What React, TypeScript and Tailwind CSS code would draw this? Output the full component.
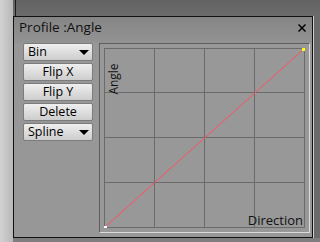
import React from 'react'

const font = { fontFamily: '"Open Sans", "Noto Sans", "Liberation Sans", sans-serif' }

function Arrow() {
  return (
    <svg width="10" height="5" viewBox="0 0 10 5" className="shrink-0">
      <polygon points="0,0 10,0 5,5" fill="#000" />
    </svg>
  )
}

function Dropdown({ label }: { label: string }) {
  return (
    <div className="h-[18px] w-[70px] flex items-center justify-between pl-[4px] pr-[3px] border border-[#7c7c7c] rounded-[2px] bg-gradient-to-b from-[#efefef] to-[#cdcdcd] text-[12.5px] leading-none text-black">
      <span>{label}</span>
      <Arrow />
    </div>
  )
}

function Button({ label }: { label: string }) {
  return (
    <div className="h-[18px] w-[70px] flex items-center justify-center border border-[#7c7c7c] rounded-[2px] bg-gradient-to-b from-[#efefef] to-[#cdcdcd] text-[12.5px] leading-none text-black">
      {label}
    </div>
  )
}

function Chart() {
  const cols = [0.5, 50.5, 100.5, 150.5, 200.5]
  const rows = [0.5, 44.5, 89.5, 134.5, 179.5]
  return (
    <div className="relative w-[211px] h-[190px] p-[4px] border border-l-[#5e5e5e] border-t-[#5e5e5e] border-r-[#dcdcdc] border-b-[#dcdcdc] bg-[#989898]">
      <svg width="201" height="180" viewBox="0 0 201 180" className="block">
        {cols.map((x) => (
          <line key={'c' + x} x1={x} y1={0} x2={x} y2={180} stroke="#6b6b6b" strokeWidth="1" />
        ))}
        {rows.map((y) => (
          <line key={'r' + y} x1={0} y1={y} x2={201} y2={y} stroke="#6b6b6b" strokeWidth="1" />
        ))}
        <line x1={0.5} y1={179.5} x2={200.5} y2={0.5} stroke="#ff4f63" strokeWidth="1" />
        <rect x={-1} y={178} width={4} height={4} fill="#ffffff" />
        <rect x={198} y={-2} width={5} height={5} fill="#ffff00" />
      </svg>
      {/* axis labels */}
      <div className="absolute left-[7px] top-[18px] w-[13px] h-[34px] flex items-center justify-center">
        <span className="-rotate-90 text-[12px] leading-none text-[#111] whitespace-nowrap">Angle</span>
      </div>
      <div className="absolute right-[6px] bottom-[5px] text-[13px] leading-none text-[#111]">Direction</div>
    </div>
  )
}

export default function App() {
  return (
    <div className="w-[320px] h-[242px] flex overflow-hidden bg-[#6a6a6a]" style={font}>
      <div className="w-[13px] h-full bg-gradient-to-r from-[#d2d2d2] to-[#b8b8b8]" />
      <div className="flex-1 flex flex-col">
        <div className="h-[16px] flex bg-gradient-to-b from-[#626262] to-[#6c6c6c]">
          <div className="ml-[2px] w-[1px] h-full bg-[#1c1c1c]" />
        </div>
        <div className="flex">
          {/* window */}
          <div className="w-[300px] h-[222px] flex flex-col border border-[#111] bg-[#979797]">
            <div className="h-[26px] flex items-start justify-between pl-[5px] pr-[5px] pt-[1px] bg-gradient-to-b from-[#858585] to-[#939393]">
              <span className="text-[13.5px] leading-[18px] text-[#111]">Profile :Angle</span>
              <svg width="8" height="8" viewBox="0 0 8 8" className="mt-[6px] mr-[1px]">
                <path d="M0.5 0.5 L7.5 7.5 M7.5 0.5 L0.5 7.5" stroke="#000" strokeWidth="1.5" />
              </svg>
            </div>
            <div className="flex items-start pl-[9px] gap-[6px]">
              <div className="flex flex-col gap-[2px]">
                <Dropdown label="Bin" />
                <Button label="Flip X" />
                <Button label="Flip Y" />
                <Button label="Delete" />
                <Dropdown label="Spline" />
              </div>
              <Chart />
            </div>
          </div>
          <div className="w-[1px] h-[222px] bg-[#d0d0d0]" />
        </div>
        <div className="flex-1 bg-[#7e7e7e]" />
      </div>
    </div>
  )
}
